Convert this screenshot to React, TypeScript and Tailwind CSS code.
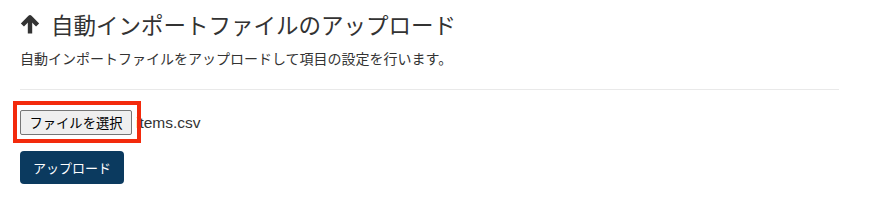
import React from 'react';

const JP = '"Noto Sans CJK JP", "Noto Sans", sans-serif';

function ArrowUp() {
  return (
    <svg width="20" height="20" viewBox="0 0 20 20" fill="none" stroke="#333" strokeWidth="4.4" className="shrink-0">
      <line x1="10" y1="19.5" x2="10" y2="4" />
      <polyline points="2.4,11 10,3.4 17.6,11" strokeLinejoin="round" />
    </svg>
  );
}

export default function App() {
  return (
    <div className="w-[869px] h-[212px] bg-white text-[#333] px-5 pt-[9px]" style={{ fontFamily: JP }}>
      {/* Title */}
      <div className="flex items-center gap-[11px] h-[30px]">
        <ArrowUp />
        <h1 className="text-[22.5px] leading-[30px] font-normal text-[#333]">自動インポートファイルのアップロード</h1>
      </div>
      <p className="mt-[9px] text-[14px] leading-[20px] text-[#333]">
        自動インポートファイルをアップロードして項目の設定を行います。
      </p>

      <div className="mt-[21px] w-[819px] border-t border-[#e9e9e9]" />

      {/* File input */}
      <div className="relative mt-5 flex items-center h-[25px]">
        <button className="h-[25px] w-[112px] border border-[#767676] rounded-[2px] bg-[#efefef] text-[13.3px] text-black leading-none">
          ファイルを選択
        </button>
        <span className="ml-[4px] text-[15.5px] text-[#333]" style={{ fontFamily: '"Liberation Sans", Arial, sans-serif' }}>
          items.csv
        </span>
        <div className="absolute left-[-7px] top-[-9px] w-[128px] h-[42px] border-[4px] border-[#f32a0c] pointer-events-none" />
      </div>

      {/* Upload */}
      <button className="mt-4 h-[33px] w-[104px] rounded-[4px] bg-[#0b3a5f] text-white text-[13px] leading-none">
        アップロード
      </button>
    </div>
  );
}
